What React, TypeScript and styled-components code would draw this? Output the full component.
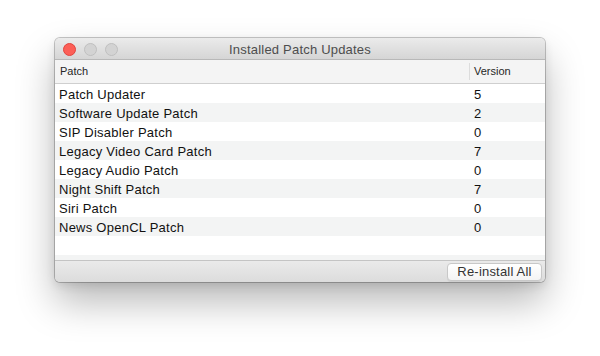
import React from 'react';
import styled, { createGlobalStyle } from 'styled-components';

const patches = [
  { name: 'Patch Updater', version: 5 },
  { name: 'Software Update Patch', version: 2 },
  { name: 'SIP Disabler Patch', version: 0 },
  { name: 'Legacy Video Card Patch', version: 7 },
  { name: 'Legacy Audio Patch', version: 0 },
  { name: 'Night Shift Patch', version: 7 },
  { name: 'Siri Patch', version: 0 },
  { name: 'News OpenCL Patch', version: 0 },
];

const GlobalStyle = createGlobalStyle`
  html, body {
    margin: 0;
    padding: 0;
    background: #ffffff;
  }
  body {
    font-family: 'Liberation Sans', Arial, sans-serif;
  }
`;

const App = () => (
  <>
    <GlobalStyle />
    <Page>
      <Window>
        <TitleBar>
          <Lights>
            <Light $color="#fc5f57" $border="#e0443e" />
            <Light $color="#d3d3d3" $border="#bfbfbf" />
            <Light $color="#d3d3d3" $border="#bfbfbf" />
          </Lights>
          <Title>Installed Patch Updates</Title>
        </TitleBar>
        <Table>
          <HeaderRow>
            <HeaderCell>Patch</HeaderCell>
            <HeaderCell $divider>Version</HeaderCell>
          </HeaderRow>
          <Body>
            {patches.map((p, i) => (
              <Row key={p.name} $striped={i % 2 === 1}>
                <Cell>{p.name}</Cell>
                <Cell $version>{p.version}</Cell>
              </Row>
            ))}
            <Row $striped={false} />
            <Row $striped />
          </Body>
        </Table>
        <BottomBar>
          <Button>Re-install All</Button>
        </BottomBar>
      </Window>
    </Page>
  </>
);

const Page = styled.div`
  width: 600px;
  height: 356px;
  padding: 38px 0 0 55px;
  box-sizing: border-box;
`;

const Window = styled.div`
  width: 490px;
  height: 244px;
  border-radius: 5px;
  overflow: hidden;
  display: flex;
  flex-direction: column;
  background: #ececec;
  box-shadow: 0 0 0 1px rgba(0, 0, 0, 0.22), 0 20px 38px rgba(0, 0, 0, 0.28),
    0 4px 10px rgba(0, 0, 0, 0.1);
`;

const TitleBar = styled.div`
  height: 21px;
  position: relative;
  display: flex;
  align-items: center;
  justify-content: center;
  background: linear-gradient(#ebebeb, #d5d5d5);
  border-bottom: 1px solid #b8b8b8;
  flex-shrink: 0;
`;

const Lights = styled.div`
  position: absolute;
  left: 8px;
  top: 5px;
  display: flex;
  gap: 8px;
`;

const Light = styled.span<{ $color: string; $border: string }>`
  width: 11px;
  height: 11px;
  border-radius: 50%;
  background: ${(p) => p.$color};
  border: 0.5px solid ${(p) => p.$border};
`;

const Title = styled.div`
  font-size: 13px;
  letter-spacing: 0.2px;
  color: #4d4d4d;
  padding-top: 1px;
`;

const Table = styled.div`
  flex: 1;
  display: flex;
  flex-direction: column;
  background: #ffffff;
  overflow: hidden;
`;

const HeaderRow = styled.div`
  height: 23px;
  display: grid;
  grid-template-columns: 414px 1fr;
  align-items: center;
  background: #f4f4f4;
  border-bottom: 1px solid #cfcfcf;
  flex-shrink: 0;
`;

const HeaderCell = styled.div<{ $divider?: boolean }>`
  font-size: 11px;
  color: #262626;
  padding-left: ${(p) => (p.$divider ? '4px' : '5px')};
  border-left: ${(p) => (p.$divider ? '1px solid #dcdcdc' : 'none')};
  line-height: 17px;
`;

const Body = styled.div`
  flex: 1;
  overflow: hidden;
`;

const Row = styled.div<{ $striped: boolean }>`
  height: 19px;
  display: grid;
  grid-template-columns: 414px 1fr;
  align-items: center;
  background: ${(p) => (p.$striped ? '#f3f4f4' : '#ffffff')};
`;

const Cell = styled.div<{ $version?: boolean }>`
  font-size: 13px;
  letter-spacing: 0.25px;
  color: #111111;
  padding-top: 2px;
  padding-left: ${(p) => (p.$version ? '5px' : '4px')};
`;

const BottomBar = styled.div`
  height: 21px;
  flex-shrink: 0;
  display: flex;
  justify-content: flex-end;
  align-items: center;
  padding-right: 3px;
  background: linear-gradient(#eaeaea, #dcdcdc);
  border-top: 1px solid #c4c4c4;
`;

const Button = styled.button`
  height: 18px;
  width: 95px;
  padding: 0;
  font-family: 'Liberation Sans', Arial, sans-serif;
  font-size: 13px;
  letter-spacing: 0.2px;
  color: #333333;
  background: linear-gradient(#ffffff, #f4f4f4);
  border: 1px solid #c8c8c8;
  border-radius: 4px;
  box-shadow: 0 1px 0 rgba(0, 0, 0, 0.06);
`;

export default App;
